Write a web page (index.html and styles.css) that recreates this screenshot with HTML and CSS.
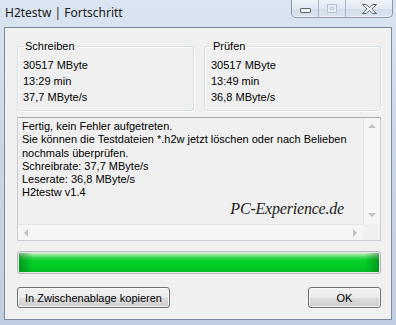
FILE: index.html
```html
<!DOCTYPE html>
<html lang="de">
<head>
    <meta charset="UTF-8">
    <title>H2testw | Fortschritt</title>
    <link rel="stylesheet" href="styles.css">
</head>
<body>
    <div class="window">
        <div class="titlebar">
            <span class="title">H2testw | Fortschritt</span>
            <div class="caption-buttons">
                <span class="cap cap-min"><span class="min-glyph"></span></span>
                <span class="cap cap-max"><span class="max-glyph"></span></span>
                <span class="cap cap-close">
                    <svg width="15" height="10" viewBox="0 0 15 10">
                        <polygon points="0.5,0.5 4,0.5 7.5,3.5 11,0.5 14.5,0.5 9.8,5 14.5,9.5 11,9.5 7.5,6.5 4,9.5 0.5,9.5 5.2,5" fill="#fff" stroke="#5a6473" stroke-width="1"/>
                    </svg>
                </span>
            </div>
        </div>
        <div class="client">
            <div class="groups">
                <fieldset class="group">
                    <legend>Schreiben</legend>
                    <div class="line">30517 MByte</div>
                    <div class="line">13:29 min</div>
                    <div class="line">37,7 MByte/s</div>
                </fieldset>
                <fieldset class="group group-right">
                    <legend>Prüfen</legend>
                    <div class="line">30517 MByte</div>
                    <div class="line">13:49 min</div>
                    <div class="line">36,8 MByte/s</div>
                </fieldset>
            </div>
            <div class="memo">
                <div class="memo-text">
                    Fertig, kein Fehler aufgetreten.<br>
                    Sie können die Testdateien *.h2w jetzt löschen oder nach Belieben<br>
                    nochmals überprüfen.<br>
                    Schreibrate: 37,7 MByte/s<br>
                    Leserate: 36,8 MByte/s<br>
                    H2testw v1.4
                </div>
                <div class="vscroll">
                    <span class="arrow arrow-up"></span>
                    <span class="arrow arrow-down"></span>
                </div>
                <div class="hscroll">
                    <span class="arrow arrow-left"></span>
                    <span class="arrow arrow-right"></span>
                </div>
                <div class="corner"></div>
                <span class="watermark">PC-Experience.de</span>
            </div>
            <div class="progress"><div class="progress-fill"></div></div>
            <div class="buttons">
                <button class="btn btn-copy">In Zwischenablage kopieren</button>
                <button class="btn btn-ok">OK</button>
            </div>
        </div>
    </div>
</body>
</html>
```

FILE: styles.css
```css
* {
    margin: 0;
    padding: 0;
    box-sizing: border-box;
}

body {
    width: 396px;
    height: 325px;
    overflow: hidden;
    font-family: 'Liberation Sans', Arial, sans-serif;
    font-size: 11px;
    color: #000;
}

.window {
    width: 396px;
    height: 325px;
    display: flex;
    flex-direction: column;
    background: linear-gradient(180deg, #dae5f1 0%, #cad8e8 40%, #bfcfe1 100%);
}

/* title bar */

.titlebar {
    height: 27px;
    display: flex;
    justify-content: space-between;
    align-items: flex-start;
    padding-right: 3px;
}

.title {
    font-family: 'Noto Sans', 'Open Sans', sans-serif;
    font-size: 12px;
    line-height: 16px;
    padding: 5px 0 0 5px;
    color: #1a1a1a;
}

.caption-buttons {
    display: flex;
    height: 18px;
    border: 1px solid #8b98a9;
    border-top: none;
    border-radius: 0 0 5px 5px;
    overflow: hidden;
    background: linear-gradient(180deg, #eef3f9 0%, #e1e9f3 50%, #d3deea 51%, #dbe4ef 100%);
    box-shadow: inset 0 -1px 0 rgba(255, 255, 255, 0.6);
}

.cap {
    display: flex;
    align-items: center;
    justify-content: center;
    height: 100%;
}

.cap-min {
    width: 27px;
    border-right: 1px solid #a9b5c4;
}

.cap-max {
    width: 27px;
    border-right: 1px solid #a9b5c4;
}

.cap-close {
    width: 46px;
    padding-top: 1px;
}

.min-glyph {
    width: 11px;
    height: 5px;
    margin-top: 3px;
    background: #fff;
    border: 1px solid #5a6473;
    border-radius: 1px;
}

.max-glyph {
    width: 10px;
    height: 9px;
    border: 1px solid #b7c1cd;
    box-shadow: inset 0 0 0 2px #e8eef5, inset 0 0 0 3px #c3ccd7;
}

/* client area */

.client {
    flex: 1;
    margin: 0 4px 5px 4px;
    border: 1px solid #7d8a9b;
    background: #f0f0f0;
    padding: 12px 10px 11px 12px;
    display: flex;
    flex-direction: column;
}

.groups {
    display: grid;
    grid-template-columns: 1fr 1fr;
    gap: 10px;
}

.group {
    min-width: 0;
    border: 1px solid #d5dfe5;
    border-radius: 3px;
    box-shadow: inset 1px 1px 0 #fff, 1px 1px 0 #fff;
    padding: 4px 5px 5px 5px;
}

.group-right {
    padding-left: 6px;
}

.group legend {
    padding: 0 2px;
    line-height: 13px;
}

.line {
    line-height: 16px;
    height: 16px;
}

/* read only memo */

.memo {
    position: relative;
    margin-top: 6px;
    height: 124px;
    display: grid;
    grid-template-columns: 1fr 17px;
    grid-template-rows: 1fr 16px;
    border: 1px solid #c9ccd2;
    border-top-color: #abadb3;
    background: #f0f0f0;
}

.memo-text {
    padding: 2px 0 0 4px;
    line-height: 13.3px;
    white-space: nowrap;
    overflow: hidden;
}

.vscroll {
    display: flex;
    flex-direction: column;
    justify-content: space-between;
    align-items: center;
    padding: 6px 0 7px;
    background: #f5f5f5;
    border-left: 1px solid #e6e6e6;
}

.hscroll {
    display: flex;
    justify-content: space-between;
    align-items: center;
    padding: 0 6px;
    background: #f5f5f5;
    border-top: 1px solid #e6e6e6;
}

.corner {
    background: #f0f0f0;
}

.arrow {
    width: 0;
    height: 0;
    border-style: solid;
    border-color: transparent;
}

.arrow-up {
    border-width: 0 4px 4px 4px;
    border-bottom-color: #bfc2c6;
}

.arrow-down {
    border-width: 4px 4px 0 4px;
    border-top-color: #bfc2c6;
}

.arrow-left {
    border-width: 4px 4px 4px 0;
    border-right-color: #bfc2c6;
}

.arrow-right {
    border-width: 4px 0 4px 4px;
    border-left-color: #bfc2c6;
}

.watermark {
    position: absolute;
    right: 36px;
    bottom: 22px;
    font-family: 'Liberation Serif', 'Times New Roman', serif;
    font-style: italic;
    font-size: 16px;
    line-height: 18px;
    letter-spacing: -0.2px;
    color: #1c1c1c;
}

/* progress bar */

.progress {
    margin-top: 10px;
    height: 23px;
    border: 1px solid #b3b8bd;
    border-radius: 3px;
    padding: 1px;
    background: #e6e6e6;
}

.progress-fill {
    height: 100%;
    border-radius: 1px;
    background:
        linear-gradient(90deg, rgba(0, 90, 10, 0.45) 0, rgba(0, 90, 10, 0) 14px, rgba(0, 90, 10, 0) calc(100% - 14px), rgba(0, 90, 10, 0.45) 100%),
        linear-gradient(180deg, #c8f3cb 0, #8be795 2px, #2fd648 5px, #04cf27 8px, #02cc25 70%, #05be24 100%);
}

/* buttons */

.buttons {
    margin-top: 13px;
    display: flex;
    justify-content: space-between;
}

.btn {
    height: 21px;
    font-family: 'Liberation Sans', Arial, sans-serif;
    font-size: 11px;
    color: #000;
    border: 1px solid #707070;
    border-radius: 3px;
    background: linear-gradient(180deg, #f2f2f2 0%, #ebebeb 50%, #dddddd 51%, #cfcfcf 100%);
    box-shadow: inset 0 0 0 1px rgba(255, 255, 255, 0.7);
}

.btn-copy {
    width: 153px;
}

.btn-ok {
    width: 73px;
}
```
